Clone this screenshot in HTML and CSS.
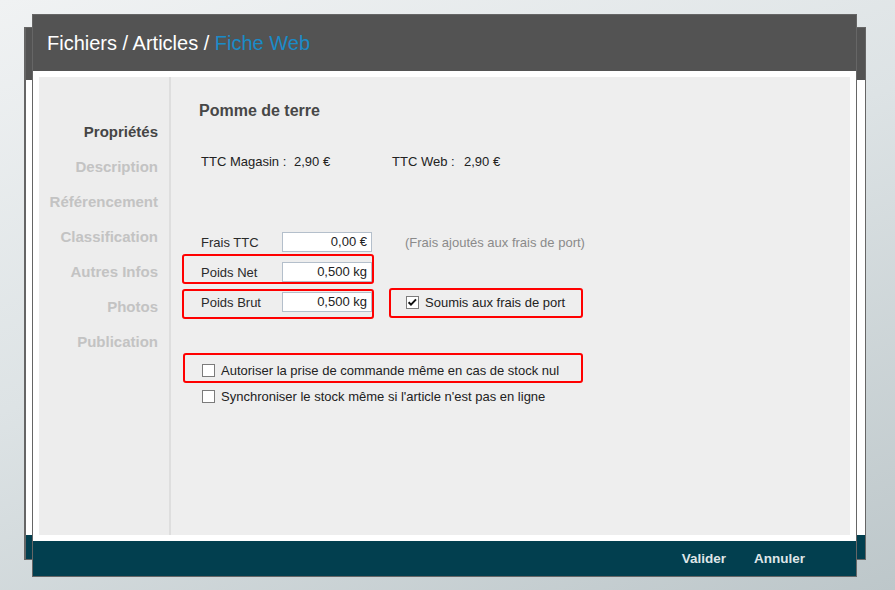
FILE: index.html
```html
<!DOCTYPE html>
<html lang="fr">
<head>
<meta charset="utf-8">
<title>Fiche Web</title>
<link rel="stylesheet" href="styles.css">
</head>
<body>
<div class="desk">
  <div class="win win-back">
    <div class="back-head"></div>
    <div class="back-body"></div>
    <div class="back-foot"></div>
  </div>

  <div class="win win-front">
    <header class="win-head">
      <h1 class="crumbs">Fichiers / Articles / <span class="crumb-current">Fiche Web</span></h1>
    </header>
    <div class="win-body">
      <div class="panel">
        <nav class="side">
          <a class="side-item active">Propriétés</a>
          <a class="side-item">Description</a>
          <a class="side-item">Référencement</a>
          <a class="side-item">Classification</a>
          <a class="side-item">Autres Infos</a>
          <a class="side-item">Photos</a>
          <a class="side-item">Publication</a>
        </nav>
        <main class="content">
          <h2 class="product">Pomme de terre</h2>
          <div class="prices">
            <span class="price-label pl-1">TTC Magasin :</span><span class="price-val pv-1">2,90 €</span>
            <span class="price-label pl-2">TTC Web :</span><span class="price-val">2,90 €</span>
          </div>

          <div class="form-row row-frais">
            <span class="f-label">Frais TTC</span>
            <span class="f-input">0,00 €</span>
            <span class="hint">(Frais ajoutés aux frais de port)</span>
          </div>
          <div class="form-row row-net mark mark-net">
            <span class="f-label">Poids Net</span>
            <span class="f-input">0,500 kg</span>
          </div>
          <div class="form-row row-brut">
            <div class="mark mark-brut">
              <span class="f-label">Poids Brut</span>
              <span class="f-input">0,500 kg</span>
            </div>
            <label class="check check-soumis mark mark-soumis">
              <span class="cb"><svg viewBox="0 0 13 13" width="13" height="13"><path d="M2.6 6.2 L5 8.6 L10 3.4" fill="none" stroke="#111" stroke-width="2"/></svg></span>
              <span class="check-text">Soumis aux frais de port</span>
            </label>
          </div>

          <label class="check check-block check-auto mark mark-auto">
            <span class="cb"></span>
            <span class="check-text">Autoriser la prise de commande même en cas de stock nul</span>
          </label>
          <label class="check check-block check-sync">
            <span class="cb"></span>
            <span class="check-text">Synchroniser le stock même si l'article n'est pas en ligne</span>
          </label>
        </main>
      </div>
    </div>
    <footer class="win-foot">
      <button class="foot-btn">Valider</button>
      <button class="foot-btn">Annuler</button>
    </footer>
  </div>
</div>
</body>
</html>
```

FILE: styles.css
```css
*, *::before, *::after { box-sizing: border-box; }

html, body {
  margin: 0;
  padding: 0;
}

body {
  width: 895px;
  height: 590px;
  overflow: hidden;
  font-family: "Liberation Sans", Arial, sans-serif;
  background: linear-gradient(160deg, #f0f2f3 0%, #dde3e5 45%, #bdc7ca 100%);
}

.desk {
  position: relative;
  width: 895px;
  height: 590px;
}

/* windows on the desktop */
.win {
  position: absolute;
  display: flex;
  flex-direction: column;
  border: 1px solid #666;
}

.win-back {
  left: 24px;
  top: 27px;
  width: 842px;
  height: 533px;
  border-left-width: 2px;
  background: #fff;
}

.back-head { height: 52px; background: #535353; }
.back-body { flex: 1; background: #fff; }
.back-foot { height: 24px; background: #023f4f; }

.win-front {
  left: 32px;
  top: 14px;
  width: 825px;
  height: 563px;
  background: #fff;
}

.win-head {
  height: 56px;
  background: #535353;
  display: flex;
  align-items: center;
  padding-left: 14px;
}

.crumbs {
  margin: 0;
  font-size: 20px;
  font-weight: normal;
  color: #fff;
  line-height: 24px;
}

.crumb-current { color: #1a8bc8; }

.win-body {
  flex: 1;
  padding: 6px;
  background: #fff;
}

.panel {
  height: 100%;
  display: flex;
  background: #eeeeee;
}

.side {
  width: 132px;
  border-right: 2px solid #dedede;
  background: #ededed;
  padding-top: 37px;
  padding-right: 11px;
  display: flex;
  flex-direction: column;
  align-items: flex-end;
}

.side-item {
  display: block;
  font-size: 15px;
  font-weight: bold;
  line-height: 35px;
  color: #c3c3c3;
}

.side-item.active { color: #454545; }

.content {
  flex: 1;
  padding: 24px 0 0 28px;
  color: #2a2a2a;
  font-size: 13px;
}

.product {
  margin: 0;
  font-size: 16px;
  line-height: 20px;
  font-weight: bold;
  color: #474747;
}

.prices {
  margin-top: 33px;
  padding-left: 2px;
  display: flex;
  line-height: 16px;
  color: #222;
}

.pl-1 { width: 93px; }
.pv-1 { width: 98px; }
.pl-2 { width: 72px; }

.form-row {
  position: relative;
  display: flex;
  align-items: center;
  padding-left: 2px;
  height: 20px;
}

.row-frais { margin-top: 62px; }
.row-net { margin-top: 10px; }
.row-brut { margin-top: 10px; }

.mark-brut {
  position: relative;
  display: flex;
  align-items: center;
  height: 20px;
}

.f-label {
  width: 81px;
  color: #2a2a2a;
}

.f-input {
  width: 90px;
  height: 20px;
  border: 1px solid #b4bfcb;
  background: #fff;
  text-align: right;
  padding-right: 4px;
  line-height: 18px;
  color: #222;
}

.hint {
  margin-left: 33px;
  color: #8a8a8a;
}

/* red annotation frames drawn over the form */
.mark { position: relative; }

.mark::after {
  content: "";
  position: absolute;
  border: 2px solid #f00;
  border-radius: 3px;
  pointer-events: none;
}

.mark-net::after { left: -17px; top: -8px; width: 192px; height: 30px; }
.mark-brut::after { left: -19px; top: -3px; width: 192px; height: 30px; }
.mark-soumis::after { left: -17px; top: -6px; width: 194px; height: 30px; }
.mark-auto::after { left: -16px; top: -9px; width: 400px; height: 30px; }

.check {
  display: flex;
  align-items: center;
  height: 16px;
  color: #222;
}

.check-soumis { margin-left: 34px; }

.check-block { padding-left: 3px; }
.check-auto { margin-top: 50px; }
.check-sync { margin-top: 10px; }

.cb {
  width: 13px;
  height: 13px;
  border: 1px solid #7b7b7b;
  background: #fff;
  display: flex;
  align-items: center;
  justify-content: center;
  margin-right: 6px;
  overflow: hidden;
}

.cb svg { display: block; flex: none; }

.win-foot {
  height: 35px;
  background: #023f4f;
  display: flex;
  justify-content: flex-end;
  align-items: center;
  gap: 28px;
  padding-right: 51px;
}

.foot-btn {
  border: 0;
  background: none;
  padding: 0;
  font-family: "Liberation Sans", Arial, sans-serif;
  font-size: 13.5px;
  font-weight: bold;
  color: #dfe6e8;
  cursor: pointer;
}
```
